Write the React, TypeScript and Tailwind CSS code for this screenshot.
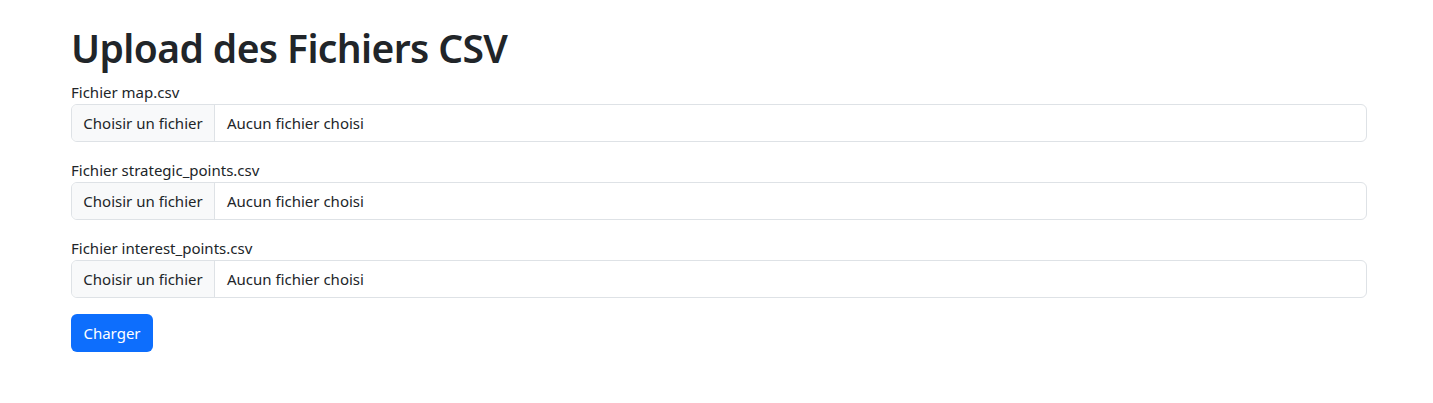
export default function App() {
  const files = ["map.csv", "strategic_points.csv", "interest_points.csv"];

  return (
    <div className="bg-white pt-6 font-['Noto_Sans',sans-serif] text-[#212529]">
      <div className="ml-[59px] w-[1320px] px-3">
        <h1 className="mb-2 text-[39px] font-semibold leading-[48px] tracking-[-0.6px]">
          Upload des Fichiers CSV
        </h1>
        <form>
          {files.map((name) => (
            <div key={name} className="mb-4">
              <label className="block text-[15px] leading-6">Fichier {name}</label>
              <div className="flex h-[38px] items-stretch overflow-hidden rounded-md border border-[#dee2e6] text-[15px]">
                <span className="flex w-[143px] items-center justify-center border-r border-[#dee2e6] bg-[#f8f9fa]">
                  Choisir un fichier
                </span>
                <span className="flex items-center pl-3">Aucun fichier choisi</span>
              </div>
            </div>
          ))}
          <button
            type="button"
            className="h-[38px] w-[82px] rounded-md bg-[#0d6efd] text-[15px] text-white"
          >
            Charger
          </button>
        </form>
      </div>
    </div>
  );
}
